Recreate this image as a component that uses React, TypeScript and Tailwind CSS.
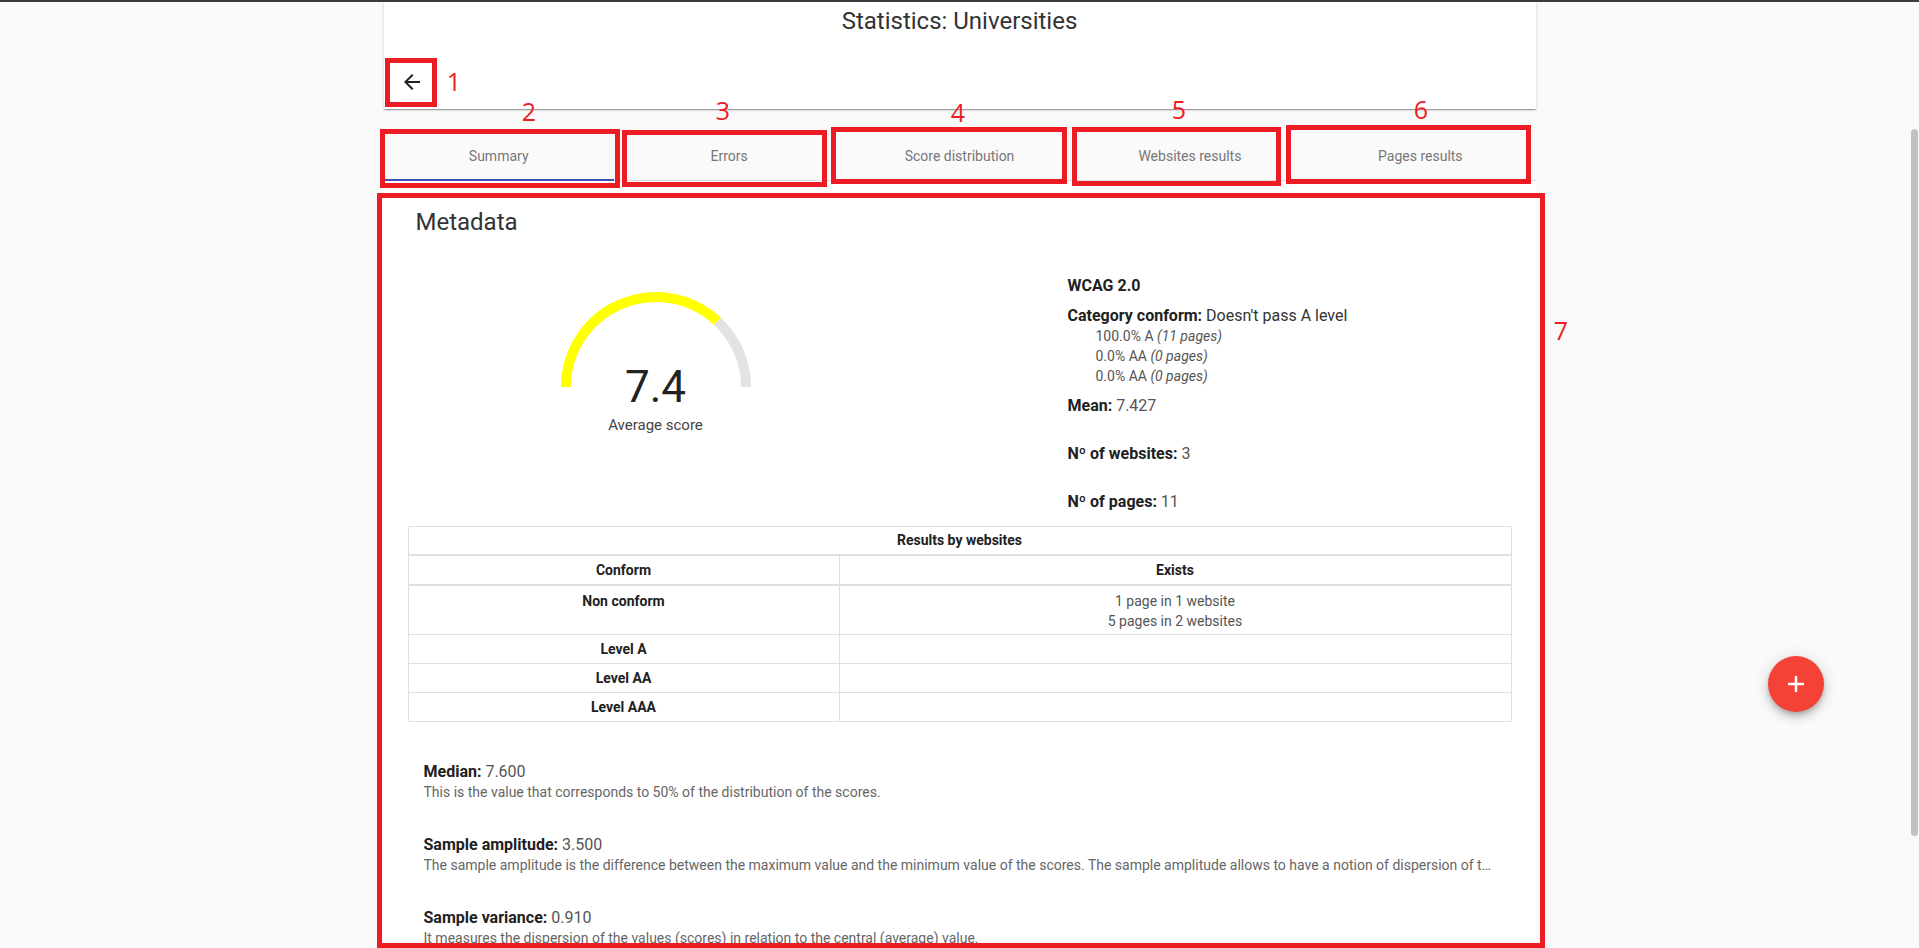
import { Plus } from 'lucide-react'

const tabs = ['Summary', 'Errors', 'Score distribution', 'Websites results', 'Pages results']

const levels = [
  { label: '100.0% A', pages: '(11 pages)' },
  { label: '0.0% AA', pages: '(0 pages)' },
  { label: '0.0% AA', pages: '(0 pages)' },
]

const levelRows = [
  { label: 'Level A', row: 'h-[29px] border-b' },
  { label: 'Level AA', row: 'h-[29px] border-b' },
  { label: 'Level AAA', row: 'h-[28px]' },
]

const stats = [
  {
    label: 'Median:',
    value: '7.600',
    text: 'This is the value that corresponds to 50% of the distribution of the scores.',
  },
  {
    label: 'Sample amplitude:',
    value: '3.500',
    text: 'The sample amplitude is the difference between the maximum value and the minimum value of the scores. The sample amplitude allows to have a notion of dispersion of the scores.',
  },
  {
    label: 'Sample variance:',
    value: '0.910',
    text: 'It measures the dispersion of the values (scores) in relation to the central (average) value.',
  },
]

// red annotation boxes drawn over the screenshot
const marks = [
  { n: '1', box: 'left-[385px] top-[58px] w-[52px] h-[49px]', label: 'left-[444px] top-[65px]' },
  { n: '2', box: 'left-[380px] top-[129px] w-[240px] h-[59px]', label: 'left-[519px] top-[95px]' },
  { n: '3', box: 'left-[622px] top-[130px] w-[205px] h-[57px]', label: 'left-[713px] top-[94px]' },
  { n: '4', box: 'left-[831px] top-[127px] w-[236px] h-[57px]', label: 'left-[948px] top-[96px]' },
  { n: '5', box: 'left-[1072px] top-[127px] w-[209px] h-[59px]', label: 'left-[1169px] top-[93px]' },
  { n: '6', box: 'left-[1286px] top-[125px] w-[245px] h-[59px]', label: 'left-[1411px] top-[93px]' },
  { n: '7', box: 'left-[377px] top-[193px] w-[1168px] h-[755px]', label: 'left-[1551px] top-[314px]' },
]

function Gauge() {
  return (
    <svg width="200" height="100" viewBox="0 0 200 100">
      <path d="M 10 100 A 90 90 0 0 1 161.6 34.4" fill="none" stroke="#ffff00" strokeWidth="10" />
      <path d="M 161.6 34.4 A 90 90 0 0 1 190 100" fill="none" stroke="#e3e3e3" strokeWidth="10" />
    </svg>
  )
}

export default function App() {
  return (
    <div className="relative h-[948px] overflow-hidden bg-[#fafafa] font-['Roboto',sans-serif] text-[#212121]">
      <div className="h-[2px] bg-[#3c3c3c]" />

      <div className="mx-auto w-[1152px]">
        <header className="h-[107px] bg-white pt-[3px] shadow-[0_2px_1px_-1px_rgba(0,0,0,0.2),0_1px_1px_0_rgba(0,0,0,0.14),0_1px_3px_0_rgba(0,0,0,0.12)]">
          <h1 className="text-center text-[24px] leading-8 text-[#333]">Statistics: Universities</h1>
          <button className="ml-4 mt-[33px] flex h-6 w-6 items-center justify-center text-[#222]">
            <svg width="24" height="24" viewBox="0 0 24 24" fill="currentColor">
              <path d="M20 11H7.83l5.59-5.59L12 4l-8 8 8 8 1.41-1.41L7.83 13H20v-2z" />
            </svg>
          </button>
        </header>

        <nav className="mt-6 flex h-12 border-b border-[#e0e0e0]">
          {tabs.map((tab, i) => (
            <div
              key={tab}
              className="relative flex flex-1 items-center justify-center text-[14px] text-[#777]"
            >
              {tab}
              {i === 0 && <div className="absolute bottom-[-1px] left-0 right-0 h-[2px] bg-[#3f51b5]" />}
            </div>
          ))}
        </nav>

        <main className="bg-white pb-10">
          <h2 className="pl-8 pt-[25px] text-[24px] leading-8 text-[#333]">Metadata</h2>

          <div className="mt-9 flex px-6">
            <div className="flex w-[496px] flex-col items-center pt-[13px]">
              <Gauge />
              <div className="-mt-[22px] text-[44px] leading-[44px] text-[#222]">7.4</div>
              <div className="mt-[6px] text-[15px] leading-5 text-[#444]">Average score</div>
            </div>

            <div className="ml-[164px] text-[16px]">
              <p className="font-bold leading-6">WCAG 2.0</p>
              <p className="mt-2 leading-5">
                <b>Category conform:</b> <span className="text-[#333]">Doesn't pass A level</span>
              </p>
              <ul className="pl-7 text-[14px] leading-5 text-[#555]">
                {levels.map((l, i) => (
                  <li key={i}>
                    {l.label} <i>{l.pages}</i>
                  </li>
                ))}
              </ul>
              <p className="mt-2 leading-6">
                <b>Mean:</b> <span className="text-[#555]">7.427</span>
              </p>
              <p className="mt-6 leading-6">
                <b>Nº of websites:</b> <span className="text-[#555]">3</span>
              </p>
              <p className="mt-6 leading-6">
                <b>Nº of pages:</b> <span className="text-[#555]">11</span>
              </p>
            </div>
          </div>

          <div className="mx-6 mt-3 border border-[#e0e0e0] text-[14px]">
            <div className="flex h-[29px] items-center justify-center border-b-2 border-[#e0e0e0] font-bold">
              Results by websites
            </div>
            <div className="flex h-[30px] border-b-2 border-[#e0e0e0] font-bold">
              <div className="flex w-[431px] items-center justify-center border-r border-[#e0e0e0]">Conform</div>
              <div className="flex flex-1 items-center justify-center">Exists</div>
            </div>
            <div className="flex h-[49px] border-b border-[#e0e0e0] leading-5">
              <div className="w-[431px] border-r border-[#e0e0e0] pt-[5px] text-center font-bold">Non conform</div>
              <div className="flex-1 pt-[5px] text-center text-[#555]">
                <p>1 page in 1 website</p>
                <p>5 pages in 2 websites</p>
              </div>
            </div>
            {levelRows.map((r) => (
              <div key={r.label} className={`flex border-[#e0e0e0] ${r.row}`}>
                <div className="flex w-[431px] items-center justify-center border-r border-[#e0e0e0] font-bold">
                  {r.label}
                </div>
                <div className="flex-1" />
              </div>
            ))}
          </div>

          <div className="pl-10 pr-[41px]">
            {stats.map((s, i) => (
              <div key={s.label} className={i === 0 ? 'mt-10' : 'mt-[33px]'}>
                <p className="text-[16px] leading-5">
                  <b>{s.label}</b> <span className="text-[#555]">{s.value}</span>
                </p>
                <p className="truncate text-[14px] leading-5 text-[#666]">{s.text}</p>
              </div>
            ))}
          </div>
        </main>
      </div>

      <button className="absolute left-[1768px] top-[656px] flex h-14 w-14 items-center justify-center rounded-full bg-[#f44336] text-white shadow-[0_3px_5px_-1px_rgba(0,0,0,0.2),0_6px_10px_0_rgba(0,0,0,0.14),0_1px_18px_0_rgba(0,0,0,0.12)]">
        <Plus className="h-6 w-6" strokeWidth={2.5} />
      </button>

      <div className="absolute right-[1px] top-[129px] h-[707px] w-[7px] rounded-full bg-[#c1c1c1]" />

      {marks.map((m) => (
        <div key={m.n}>
          <div className={`pointer-events-none absolute border-[5px] border-[#ed1c24] ${m.box}`} />
          <div
            className={`absolute h-8 w-5 text-center font-['Open_Sans',sans-serif] text-[25px] leading-8 text-[#ed1c24] ${m.label}`}
          >
            {m.n}
          </div>
        </div>
      ))}
    </div>
  )
}
